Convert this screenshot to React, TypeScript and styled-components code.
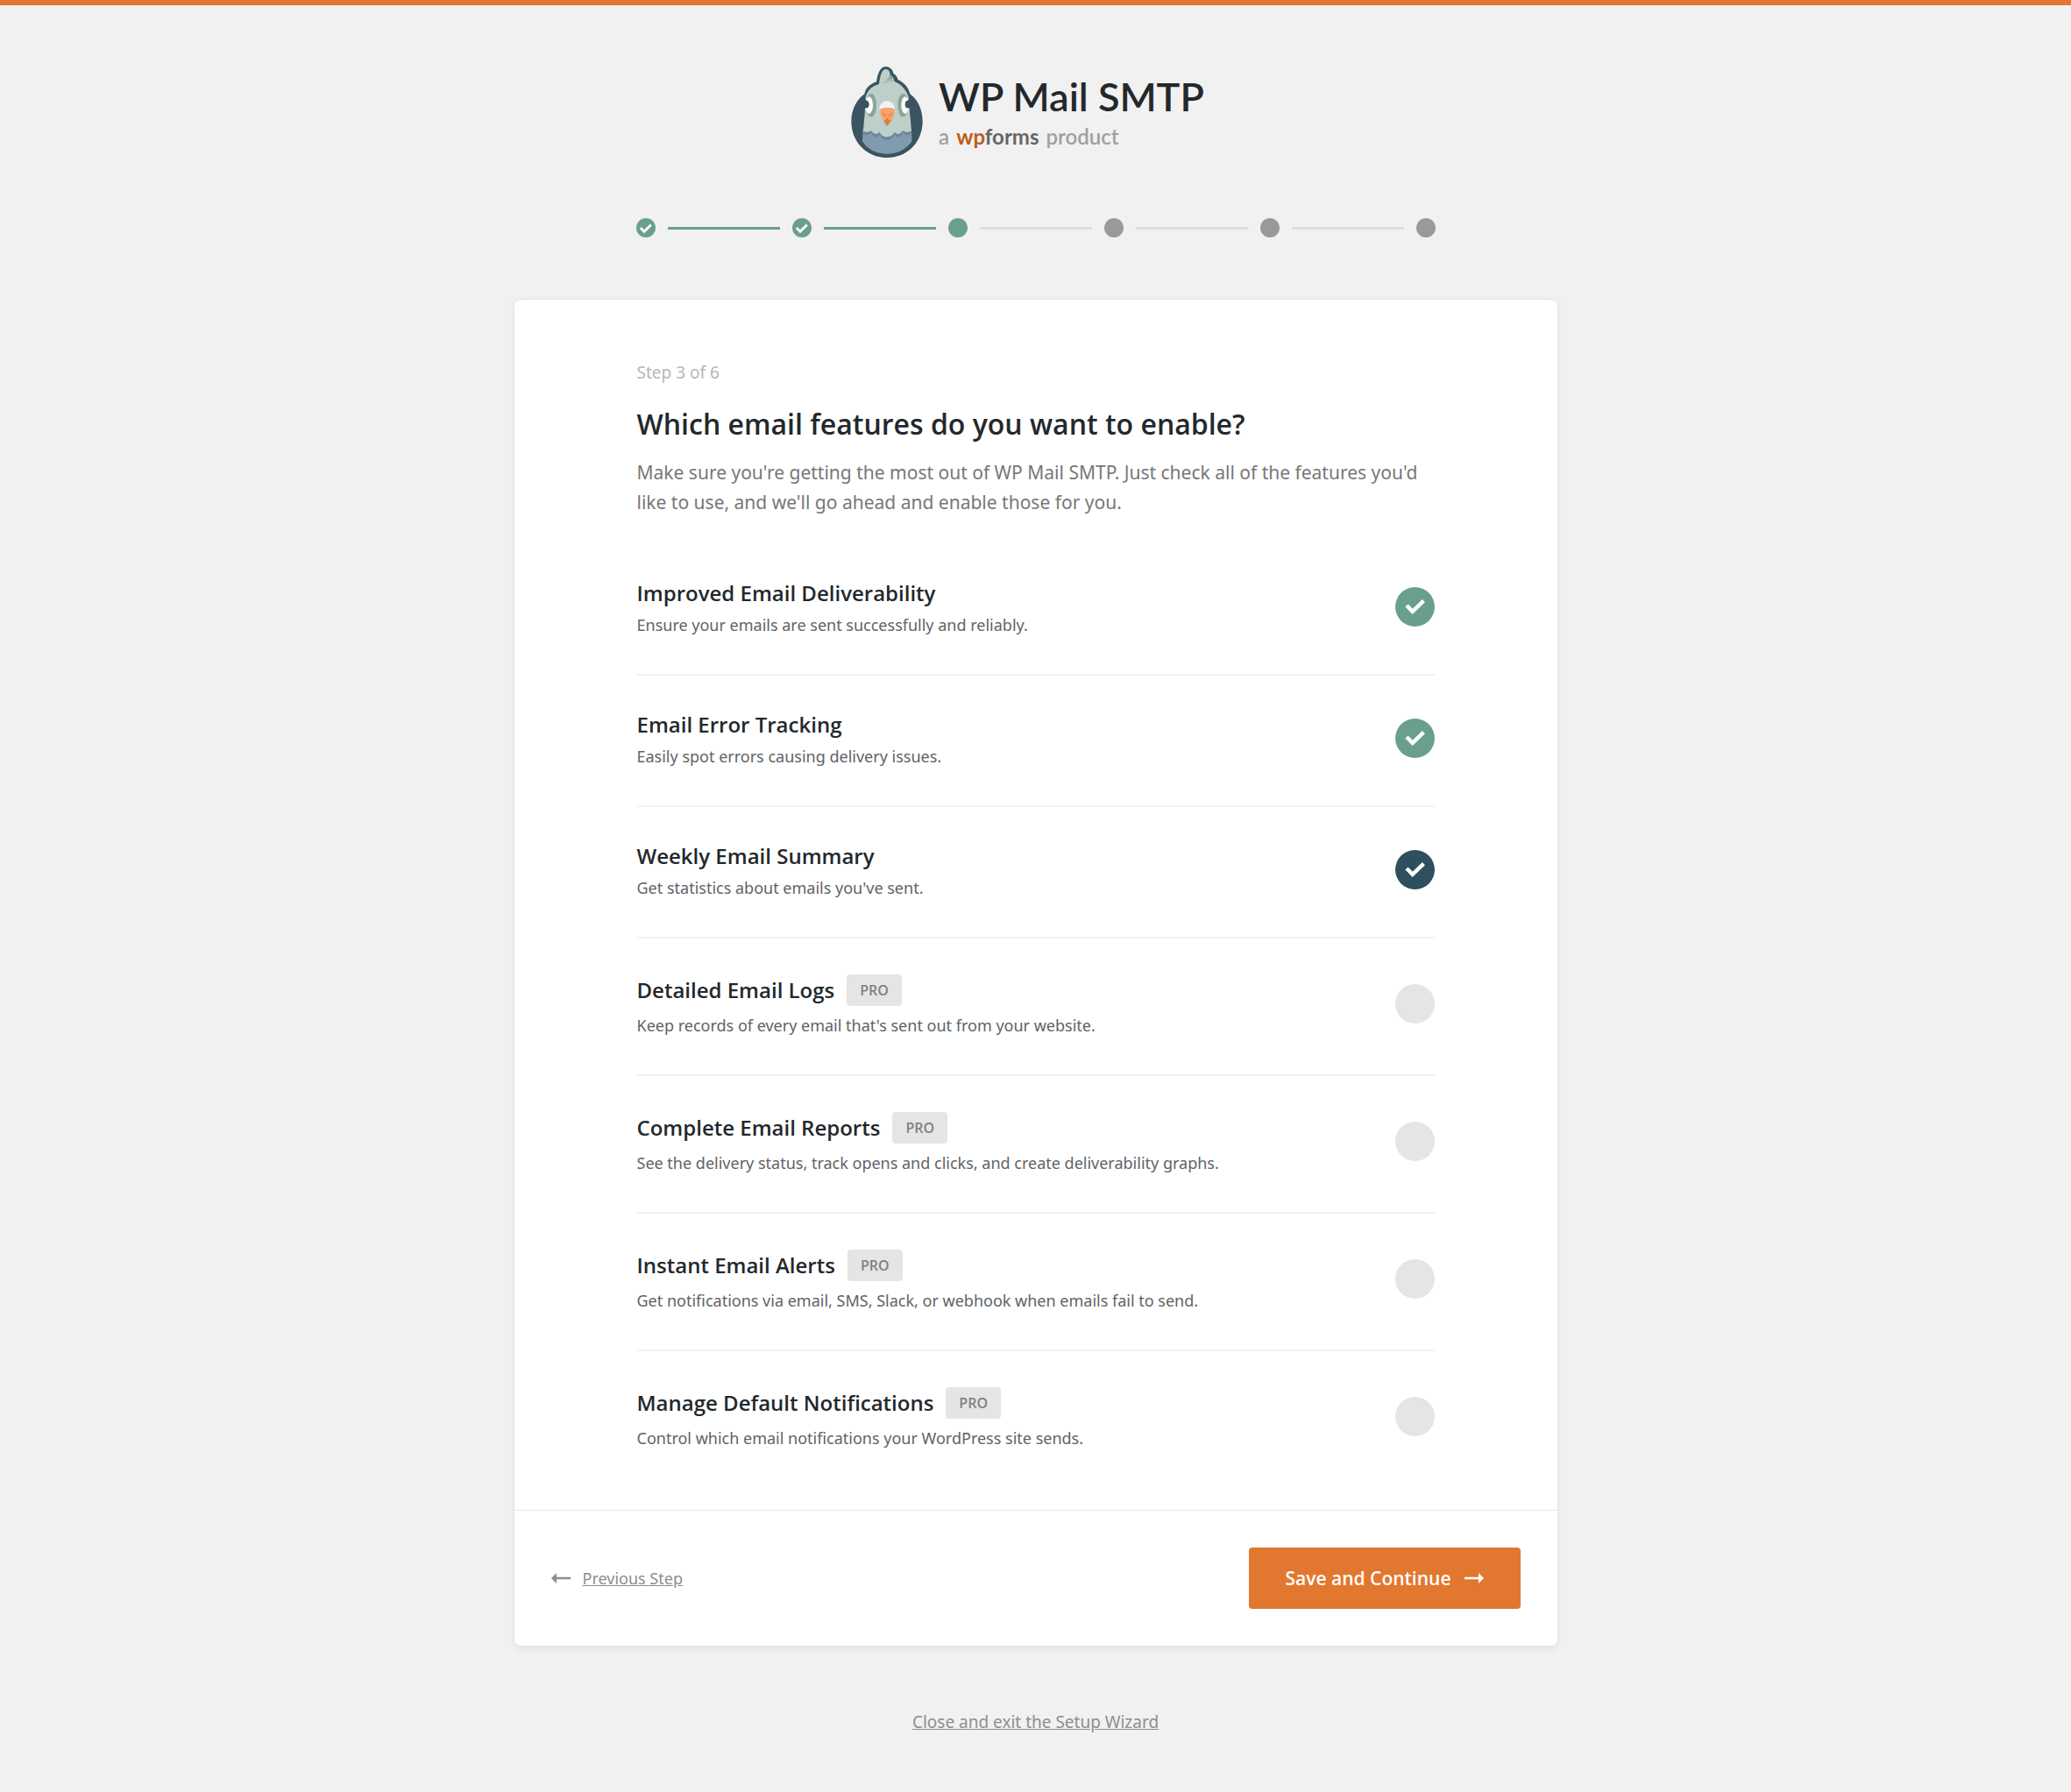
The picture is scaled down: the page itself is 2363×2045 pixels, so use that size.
import React, { useState } from 'react';
import styled, { createGlobalStyle } from 'styled-components';

const color = {
  page: '#f1f1f1',
  orange: '#e27730',
  green: '#6aa08b',
  navy: '#2d4f5e',
  ink: '#23282c',
};

const bodyFont = '"Noto Sans", "Open Sans", sans-serif';
const strongFont = '"Open Sans", "Noto Sans", sans-serif';

const GlobalStyle = createGlobalStyle`
  *, *::before, *::after { box-sizing: border-box; }
  body {
    margin: 0;
    background: ${color.page};
    color: ${color.ink};
    font-family: ${bodyFont};
  }
`;

const Page = styled.div`
  display: flex;
  flex-direction: column;
  align-items: center;
  min-height: 100vh;
  padding: 70px 16px 64px;
  border-top: 6px solid ${color.orange};
`;

const Brand = styled.header`
  display: flex;
  gap: 18px;
  padding-right: 18px;
`;

const BrandText = styled.div`
  padding-top: 10px;
  font-family: Lato, sans-serif;
`;

const BrandName = styled.div`
  font-size: 45px;
  font-weight: 600;
  line-height: 48px;
  white-space: nowrap;
`;

const BrandLine = styled.div`
  display: flex;
  gap: 8px;
  margin-top: 8px;
  font-size: 24px;
  font-weight: 600;
  line-height: 28px;
  color: #a0a0a0;
`;

const FormsName = styled.span`
  font-weight: 700;
  color: #666;
`;

const FormsAccent = styled.span`
  color: #bc5e1b;
`;

const Steps = styled.ol`
  display: flex;
  align-items: center;
  gap: 14px;
  width: 100%;
  max-width: 912px;
  margin: 69px 0 70px;
  padding: 0;
  list-style: none;
`;

const StepDot = styled.li<{ $reached: boolean }>`
  flex: none;
  width: 22px;
  height: 22px;
  border-radius: 50%;
  background: ${(p) => (p.$reached ? color.green : '#999')};
`;

const StepLine = styled.li<{ $reached: boolean }>`
  flex: 1;
  height: 3px;
  background: ${(p) => (p.$reached ? color.green : '#ddd')};
`;

const StepTick = styled.svg`
  display: block;
  width: 22px;
  height: 22px;
`;

const Card = styled.main`
  width: 100%;
  max-width: 1192px;
  border: 1px solid #e6e6e6;
  border-radius: 8px;
  background: #fff;
  box-shadow: 0 3px 6px rgba(0, 0, 0, 0.05);
`;

const CardBody = styled.div`
  padding: 71px 140px 70px;

  @media (max-width: 1000px) {
    padding: 40px 24px;
  }
`;

const StepCount = styled.p`
  margin: 0;
  font-size: 19px;
  line-height: 24px;
  color: #b6b6b6;
`;

const Heading = styled.h1`
  margin: 27px 0 18px;
  font-family: ${strongFont};
  font-size: 32px;
  font-weight: 600;
  line-height: 40px;
`;

const Intro = styled.p`
  margin: 0 0 31px;
  font-size: 21px;
  line-height: 34px;
  color: #777;
`;

const FeatureList = styled.ul`
  margin: 0;
  padding: 0;
  list-style: none;
`;

const FeatureRow = styled.li`
  display: flex;
  align-items: center;
  justify-content: space-between;
  gap: 24px;
  padding: 38px 0 44px;
  border-bottom: 2px solid #f1f1f1;

  &:last-child {
    padding-bottom: 0;
    border-bottom: 0;
  }
`;

const FeatureTitle = styled.div<{ $tall: boolean }>`
  display: flex;
  align-items: center;
  gap: 14px;
  height: ${(p) => (p.$tall ? '41px' : '34px')};
`;

const FeatureLabel = styled.label`
  font-family: ${strongFont};
  font-size: 24px;
  font-weight: 600;
  cursor: pointer;
`;

const ProBadge = styled.span`
  padding: 0 15px;
  border-radius: 4px;
  background: #e5e5e5;
  font-family: ${strongFont};
  font-size: 16px;
  font-weight: 600;
  line-height: 36px;
  color: #808080;
`;

const FeatureText = styled.p`
  margin: 8px 0 0;
  font-size: 18px;
  line-height: 24px;
  color: #5f6366;
`;

const CheckWrap = styled.span`
  display: grid;
  flex: none;
  width: 45px;
  height: 45px;

  > * {
    grid-area: 1 / 1;
  }
`;

const CheckInput = styled.input`
  appearance: none;
  width: 45px;
  height: 45px;
  margin: 0;
  border-radius: 50%;
  background: #e5e5e5;
  cursor: pointer;

  &:checked {
    background: ${color.navy};
  }

  &:checked:disabled {
    background: ${color.green};
    cursor: default;
  }

  & + svg {
    visibility: hidden;
    pointer-events: none;
  }

  &:checked + svg {
    visibility: visible;
  }
`;

const CardFooter = styled.footer`
  display: flex;
  flex-wrap: wrap;
  align-items: center;
  justify-content: space-between;
  gap: 24px;
  padding: 42px;
  border-top: 1px solid #e8e8e8;
`;

const PreviousLink = styled.a`
  display: flex;
  align-items: center;
  gap: 14px;
  font-size: 18px;
  line-height: 24px;
  color: #8d8d8d;
  text-decoration: none;
`;

const LinkText = styled.span`
  text-decoration: underline;
`;

const SaveButton = styled.button`
  display: flex;
  align-items: center;
  gap: 15px;
  height: 70px;
  padding: 0 42px;
  border: 0;
  border-radius: 4px;
  background: ${color.orange};
  font-family: ${strongFont};
  font-size: 21px;
  font-weight: 600;
  color: #fff;
  cursor: pointer;
`;

const ExitLink = styled.a`
  margin-top: 74px;
  font-size: 19px;
  line-height: 24px;
  color: #8d8f8e;
`;

function Pigeon() {
  return (
    <svg width="82" height="104" viewBox="34 18 246 312" aria-hidden="true">
      <path
        fill="#3a5462"
        d="M157 330C88 330 35 277 35 205C35 165 54 130 80 112C84 92 98 78 121 70C124 48 132 18 152 18C168 18 177 29 179 42C187 46 194 55 194 62C215 72 232 90 236 112C262 130 279 165 279 205C279 277 227 330 157 330Z"
      />
      <path
        fill="#bdcfc8"
        d="M75 245L80 190L84 122C92 98 106 84 130 78C133 54 139 27 152 27C164 27 169 38 167 47C176 50 181 57 182 68C206 78 224 98 231 122L237 190L241 245Z"
      />
      <path fill="#8aa598" d="M148 68C160 61 166 55 167 44C175 50 178 57 175 62C168 60 158 62 148 68Z" />
      <path
        d="M150 73C160 66 172 64 183 68"
        fill="none"
        stroke="#8aa598"
        strokeWidth="3"
        strokeLinecap="round"
      />
      <ellipse cx="103" cy="150" rx="18" ry="40" fill="#8aa598" />
      <ellipse cx="212" cy="150" rx="18" ry="40" fill="#8aa598" />
      <ellipse cx="96" cy="150" rx="13" ry="29" fill="#fff" />
      <ellipse cx="219" cy="150" rx="13" ry="29" fill="#fff" />
      <path fill="#3a5462" d="M76 125C82 136 96 130 96 147C96 162 84 162 81 158L79 190L70 190V125Z" />
      <path fill="#3a5462" d="M240 125C233 136 219 130 219 147C219 162 231 162 234 158L237 190L246 190V125Z" />
      <path fill="#809bb0" d="M75 238H241L242 274C225 300 195 317 157 317C119 317 89 300 73 274Z" />
      <path
        fill="#6985a0"
        d="M75 240V246Q91 260 103 244Q113 269 131 252Q140 269 157 269Q174 269 183 252Q201 269 211 244Q223 260 241 246V240Z"
      />
      <path
        fill="#bdcfc8"
        d="M75 240V238Q91 250 103 235Q113 258 131 243Q140 259 157 259Q174 259 183 243Q201 258 211 235Q223 250 241 238V230H76Z"
      />
      <path fill="#eef3fa" d="M131 165C132 126 182 126 184 165Q157 154 131 165Z" />
      <path fill="#dc8140" d="M142 192L158 186L176 192C172 204 165 213 158 222C151 213 145 204 142 192Z" />
      <path
        fill="#f8a267"
        d="M134 165C142 156 175 156 183 165C184 178 180 190 174 200C168 203 162 202 158 193C154 202 149 203 144 200C137 190 133 178 134 165Z"
      />
      <path
        d="M142 180C147 178 150 182 151 187M175 180C170 178 167 182 166 187"
        fill="none"
        stroke="#dc8140"
        strokeWidth="4"
        strokeLinecap="round"
      />
    </svg>
  );
}

function Arrow({ back = false }: { back?: boolean }) {
  return (
    <svg width="22" height="12" viewBox="0 0 22 12" fill="currentColor" aria-hidden="true">
      {back ? <path d="M0 6L6 0V4.7H22V7.3H6V12Z" /> : <path d="M22 6L16 0V4.7H0V7.3H16V12Z" />}
    </svg>
  );
}

const STEP_COUNT = 6;
const CURRENT_STEP = 3;

function Progress() {
  const items: React.ReactNode[] = [];
  for (let step = 1; step <= STEP_COUNT; step++) {
    if (step > 1) {
      items.push(<StepLine key={`line-${step}`} $reached={step <= CURRENT_STEP} aria-hidden="true" />);
    }
    items.push(
      <StepDot
        key={step}
        $reached={step <= CURRENT_STEP}
        aria-label={`Step ${step}`}
        aria-current={step === CURRENT_STEP ? 'step' : undefined}
      >
        {step < CURRENT_STEP && (
          <StepTick viewBox="0 0 22 22" fill="none" stroke="#fff" strokeWidth="2.8" aria-hidden="true">
            <path d="M4.8 11L9 15.2L16.8 7.6" />
          </StepTick>
        )}
      </StepDot>,
    );
  }
  return <Steps>{items}</Steps>;
}

type Feature = {
  id: string;
  title: string;
  text: string;
  locked?: boolean;
  pro?: boolean;
};

const features: Feature[] = [
  {
    id: 'deliverability',
    title: 'Improved Email Deliverability',
    text: 'Ensure your emails are sent successfully and reliably.',
    locked: true,
  },
  { id: 'errors', title: 'Email Error Tracking', text: 'Easily spot errors causing delivery issues.', locked: true },
  { id: 'summary', title: 'Weekly Email Summary', text: "Get statistics about emails you've sent." },
  {
    id: 'logs',
    title: 'Detailed Email Logs',
    text: "Keep records of every email that's sent out from your website.",
    pro: true,
  },
  {
    id: 'reports',
    title: 'Complete Email Reports',
    text: 'See the delivery status, track opens and clicks, and create deliverability graphs.',
    pro: true,
  },
  {
    id: 'alerts',
    title: 'Instant Email Alerts',
    text: 'Get notifications via email, SMS, Slack, or webhook when emails fail to send.',
    pro: true,
  },
  {
    id: 'notifications',
    title: 'Manage Default Notifications',
    text: 'Control which email notifications your WordPress site sends.',
    pro: true,
  },
];

function FeatureItem({ feature }: { feature: Feature }) {
  const [checked, setChecked] = useState(!feature.pro);
  return (
    <FeatureRow>
      <div>
        <FeatureTitle $tall={!!feature.pro}>
          <FeatureLabel htmlFor={feature.id}>{feature.title}</FeatureLabel>
          {feature.pro && <ProBadge>PRO</ProBadge>}
        </FeatureTitle>
        <FeatureText>{feature.text}</FeatureText>
      </div>
      <CheckWrap>
        <CheckInput
          type="checkbox"
          id={feature.id}
          checked={checked}
          disabled={feature.locked}
          onChange={(e) => setChecked(e.target.checked)}
        />
        <svg viewBox="0 0 45 45" fill="none" stroke="#fff" strokeWidth="4.4" aria-hidden="true">
          <path d="M13 21L19.7 27.8L32.4 15.6" />
        </svg>
      </CheckWrap>
    </FeatureRow>
  );
}

export default function App() {
  return (
    <>
      <GlobalStyle />
      <Page>
        <Brand>
          <Pigeon />
          <BrandText>
            <BrandName>WP Mail SMTP</BrandName>
            <BrandLine>
              <span>a</span>
              <FormsName>
                <FormsAccent>wp</FormsAccent>forms
              </FormsName>
              <span>product</span>
            </BrandLine>
          </BrandText>
        </Brand>
        <Progress />
        <Card>
          <CardBody>
            <StepCount>Step 3 of 6</StepCount>
            <Heading>Which email features do you want to enable?</Heading>
            <Intro>
              Make sure you're getting the most out of WP Mail SMTP. Just check all of the features you'd like to use,
              and we'll go ahead and enable those for you.
            </Intro>
            <FeatureList>
              {features.map((feature) => (
                <FeatureItem key={feature.id} feature={feature} />
              ))}
            </FeatureList>
          </CardBody>
          <CardFooter>
            <PreviousLink href="#previous">
              <Arrow back />
              <LinkText>Previous Step</LinkText>
            </PreviousLink>
            <SaveButton type="button">
              Save and Continue
              <Arrow />
            </SaveButton>
          </CardFooter>
        </Card>
        <ExitLink href="#exit">Close and exit the Setup Wizard</ExitLink>
      </Page>
    </>
  );
}
